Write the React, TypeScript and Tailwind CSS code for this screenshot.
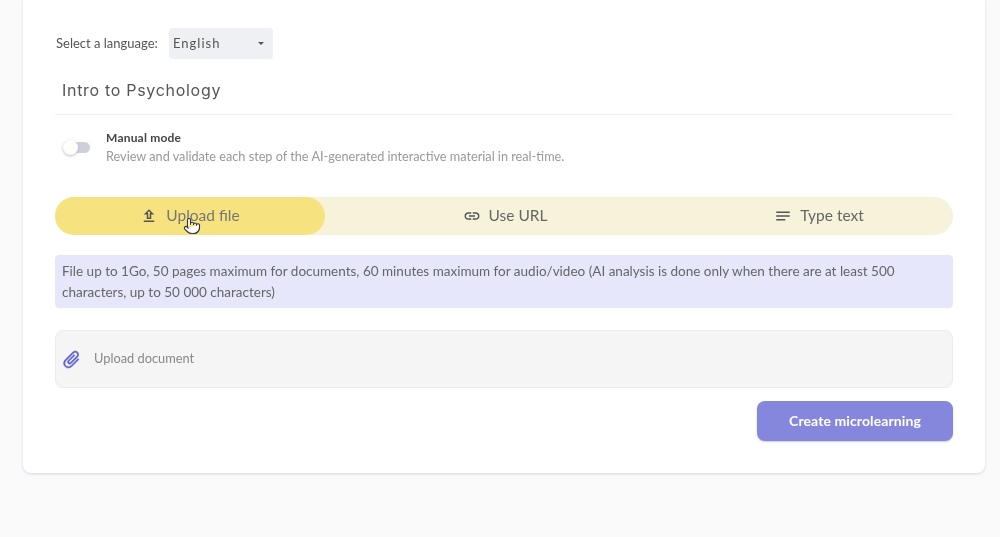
import { Pointer } from 'lucide-react'

const tabs = [
  { id: 'file', label: 'Upload file', icon: 'M9 16h6v-6h4l-7-7-7 7h4v6zm3-10.17L14.17 8H13v6h-2V8H9.83L12 5.83zM5 18h14v2H5z', active: true },
  {
    id: 'url',
    label: 'Use URL',
    icon: 'M3.9 12c0-1.71 1.39-3.1 3.1-3.1h4V7H7c-2.76 0-5 2.24-5 5s2.24 5 5 5h4v-1.9H7c-1.71 0-3.1-1.39-3.1-3.1zM8 13h8v-2H8v2zm9-6h-4v1.9h4c1.71 0 3.1 1.39 3.1 3.1s-1.39 3.1-3.1 3.1h-4V17h4c2.76 0 5-2.24 5-5s-2.24-5-5-5z',
    active: false,
  },
  { id: 'text', label: 'Type text', icon: 'M3 18h12v-2H3v2zM3 6v2h18V6H3zm0 7h18v-2H3v2z', active: false },
]

export default function App() {
  return (
    <div className="h-[537px] overflow-hidden bg-[#fafafa] font-['Lato',sans-serif] blur-[0.7px]">
      <div className="ml-[23px] h-[473px] w-[962px] rounded-b-lg bg-white px-8 pt-7 shadow-[0_1px_3px_#d5d5ea]">
        <div className="flex items-center">
          <span className="w-[114px] pl-px text-[13px] text-[#555]">Select a language:</span>
          <div className="flex h-[31px] w-[104px] items-center justify-between rounded bg-[#eff0f4] pl-1 pr-[9px]">
            <span className="text-[13px] tracking-[1px] text-[#555]">English</span>
            <span className="h-0 w-0 border-x-[3px] border-t-[3px] border-x-transparent border-t-[#555]" />
          </div>
        </div>

        <div className="mt-[17px] h-[39px] border-b border-[#f2f2f2] pl-[7px] pt-[2px] font-['Inter',sans-serif] text-base leading-6 tracking-[0.7px] text-[#555]">
          Intro to Psychology
        </div>

        <div className="mt-[14px] flex h-[36px] items-center">
          <div className="relative ml-[9px] h-[11px] w-[26px] rounded-full bg-[#cfcfdc]">
            <span className="absolute -left-px -top-[2px] h-[15px] w-[15px] rounded-full bg-white shadow-[0_1px_3px_#bbb]" />
          </div>
          <div className="ml-4">
            <div className="text-xs font-bold leading-[18px] tracking-[0.2px] text-[#444]">Manual mode</div>
            <div className="text-[12.7px] leading-[18px] text-[#999]">
              Review and validate each step of the AI-generated interactive material in real-time.
            </div>
          </div>
        </div>

        <div className="relative mt-[32px] grid h-[38px] grid-cols-[270px_1fr_268px] rounded-full bg-[#f7f3db]">
          {tabs.map((tab) => (
            <div
              key={tab.id}
              className={`flex items-center justify-center gap-2 rounded-full text-[15.5px] ${
                tab.active ? 'bg-[#f6e27f] text-[#777]' : 'text-[#666]'
              }`}
            >
              <svg viewBox="0 0 24 24" className="h-[18px] w-[18px] fill-[#555]">
                <path d={tab.icon} />
              </svg>
              {tab.label}
            </div>
          ))}
          <Pointer className="absolute left-[128px] top-[20px] h-[18px] w-[18px] fill-white text-[#333]" strokeWidth={1.5} />
        </div>

        <div className="mt-5 h-[53px] rounded-sm bg-[#e7e7fb] px-[7px] py-[6px] text-[13.5px] leading-[21px] text-[#666]">
          File up to 1Go, 50 pages maximum for documents, 60 minutes maximum for audio/video (AI analysis is done only when there are at least 500 characters, up to 50 000 characters)
        </div>

        <div className="mt-[22px] flex h-[58px] items-center rounded-lg border border-[#ececec] bg-[#f5f5f5] pl-[5px]">
          <svg viewBox="0 0 24 24" className="h-[21px] w-[21px] rotate-45 fill-[#5f5fcf] stroke-[#5f5fcf] stroke-[0.6]">
            <path d="M16.5 6v11.5c0 2.21-1.79 4-4 4s-4-1.79-4-4V5c0-1.38 1.12-2.5 2.5-2.5s2.5 1.12 2.5 2.5v10.5c0 .55-.45 1-1 1s-1-.45-1-1V6H10v9.5c0 1.38 1.12 2.5 2.5 2.5s2.5-1.12 2.5-2.5V5c0-2.21-1.79-4-4-4S7 2.79 7 5v12.5c0 3.04 2.46 5.5 5.5 5.5s5.5-2.46 5.5-5.5V6h-1.5z" />
          </svg>
          <span className="ml-[12px] text-[12.8px] text-[#888]">Upload document</span>
        </div>

        <div className="mt-[13px] flex justify-end">
          <button className="h-10 w-[196px] rounded-lg bg-[#8587dd] text-sm font-bold tracking-[0.1px] text-white shadow-[0_1px_2px_#ccc]">
            Create microlearning
          </button>
        </div>
      </div>
    </div>
  )
}
